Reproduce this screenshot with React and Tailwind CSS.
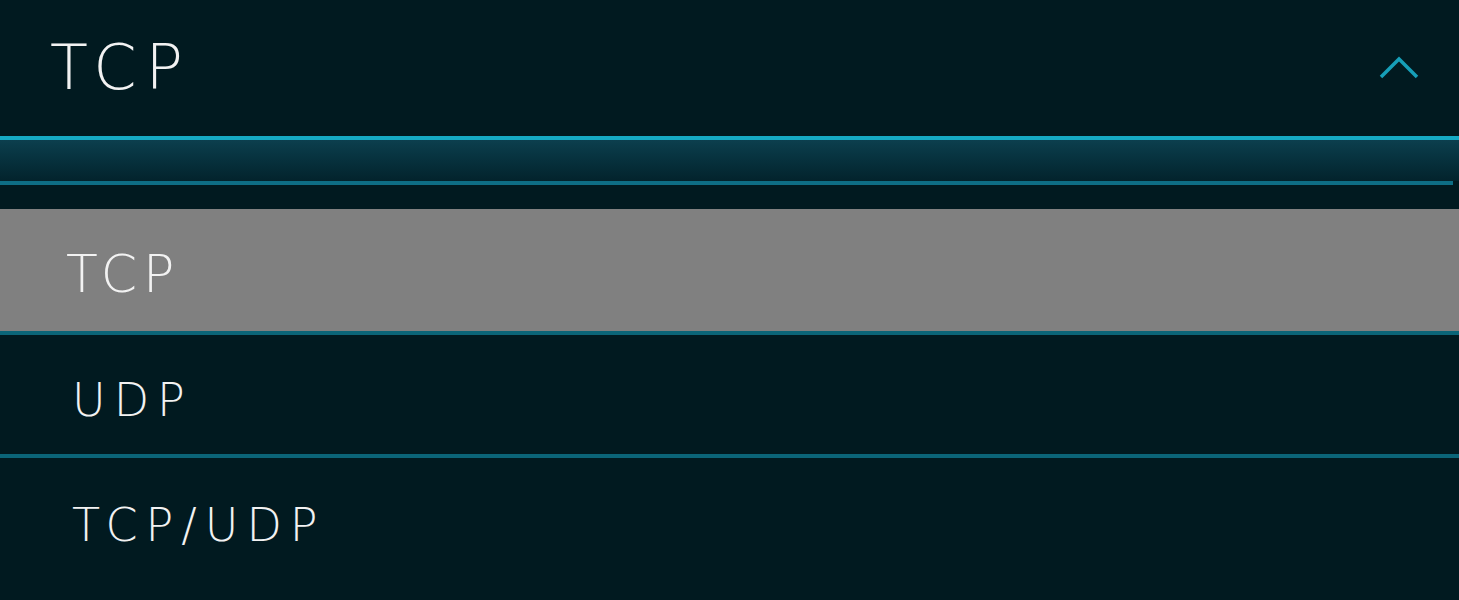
import React, { useState } from "react";

const options = ["TCP", "UDP", "TCP/UDP"];

const ChevronUp = () => (
  <svg width="40" height="24" viewBox="0 0 40 24" fill="none">
    <polyline
      points="2,21 20,3 38,21"
      stroke="#169fb8"
      strokeWidth="3.5"
      strokeLinejoin="miter"
    />
  </svg>
);

export default function App() {
  const [selected, setSelected] = useState("TCP");

  return (
    <div
      className="h-[600px] w-full overflow-hidden bg-[#011a20] text-[#f2f2f2]"
      style={{ fontFamily: '"DejaVu Sans", "Liberation Sans", sans-serif' }}
    >
      <div className="flex h-[136px] items-center justify-between pl-[50px] pr-[40px]">
        <span className="text-[62px] font-light leading-none tracking-[9px]">{selected}</span>
        <ChevronUp />
      </div>
      <div className="h-[4px] bg-[#16aac4]" />
      <div className="h-[41px] bg-gradient-to-b from-[#0c3f4e] to-[#03232c]" />
      <div className="mr-[6px] h-[4px] bg-[#0e6e85]" />
      <div className="h-[24px]" />

      <ul>
        {options.map((opt, i) => {
          const active = opt === selected;
          const last = i === options.length - 1;
          return (
            <li
              key={opt}
              onClick={() => setSelected(opt)}
              className={
                "flex cursor-pointer items-center " +
                (last ? "h-[123px] " : "border-b-4 border-[#0b6578] ") +
                (i === 0 ? "h-[126px] " : "") +
                (i === 1 ? "h-[123px] " : "") +
                (active ? "bg-[#808080] pl-[66px] pt-[8px]" : "pl-[72px] pt-[10px]")
              }
            >
              <span
                className={
                  "font-light leading-none " +
                  (active ? "text-[52px] tracking-[6px]" : "text-[46px] tracking-[8px]")
                }
              >
                {opt}
              </span>
            </li>
          );
        })}
      </ul>
    </div>
  );
}
